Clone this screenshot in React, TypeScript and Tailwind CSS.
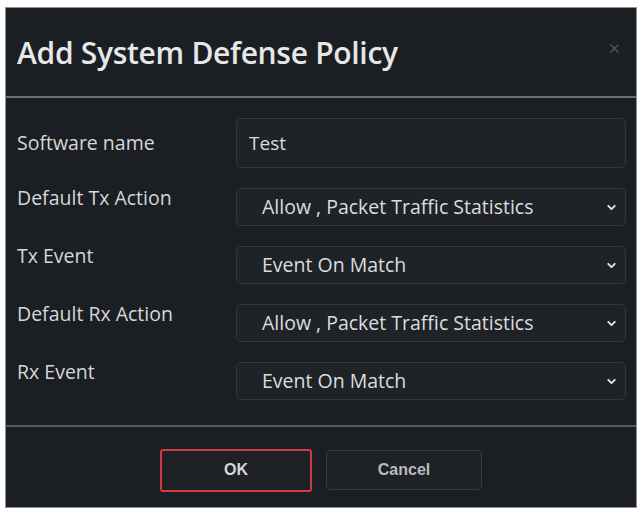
import { ChevronDown, X } from "lucide-react";

const selects = [
  { label: "Default Tx Action", value: "Allow , Packet Traffic Statistics" },
  { label: "Tx Event", value: "Event On Match" },
  { label: "Default Rx Action", value: "Allow , Packet Traffic Statistics" },
  { label: "Rx Event", value: "Event On Match" },
];

export default function App() {
  return (
    <div className="h-[514px] w-[643px] bg-white pl-[5px] pt-[7px] font-['Open_Sans',sans-serif]">
      <div className="flex h-[501px] w-[632px] flex-col border border-[#8d8f92] bg-[#1b1e22]">
        {/* Header */}
        <div className="flex h-[90px] items-center justify-between border-b-2 border-[#6c6f74] pl-[11px] pr-[14px]">
          <h2 className="text-[30px] font-semibold tracking-[-0.3px] text-[#e6e7e8]">
            Add System Defense Policy
          </h2>
          <X size={15} strokeWidth={2} className="mb-[8px] text-[#55585d]" />
        </div>

        {/* Body */}
        <div className="flex flex-1 flex-col gap-[20px] border-b-2 border-[#55585d] pl-[11px] pr-[10px] pt-[20px]">
          <div className="flex items-center">
            <span className="w-[219px] text-[19.5px] text-[#d6d7d9]">Software name</span>
            <div className="flex h-[50px] flex-1 items-center rounded-[5px] border border-[#34383e] bg-[#1f2227] px-[12px] text-[19px] text-[#dcdddf]">
              Test
            </div>
          </div>
          {selects.map((s) => (
            <div key={s.label} className="flex items-start">
              <span className="w-[219px] text-[19.5px] leading-[20px] text-[#d6d7d9]">{s.label}</span>
              <div className="flex h-[38px] flex-1 items-center justify-between rounded-[5px] border border-[#34383e] bg-[#1f2227] pl-[25px] pr-[7px] text-[19.5px] text-[#dcdddf]">
                <span>{s.value}</span>
                <ChevronDown size={13} strokeWidth={3.5} className="text-[#e2e3e5]" />
              </div>
            </div>
          ))}
        </div>

        {/* Footer */}
        <div className="flex h-[80px] items-center justify-center gap-[14px] pt-[6px]">
          <button className="h-[43px] w-[152px] rounded-[3px] border-2 border-[#cf3a44] bg-[#1e2126] font-['Liberation_Sans',sans-serif] text-[16px] font-bold text-[#d5d6d8]">
            OK
          </button>
          <button className="h-[40px] w-[156px] rounded-[5px] border border-[#3a3e44] bg-[#1e2126] font-['Liberation_Sans',sans-serif] text-[16px] font-bold text-[#b9bbbe]">
            Cancel
          </button>
        </div>
      </div>
    </div>
  );
}
